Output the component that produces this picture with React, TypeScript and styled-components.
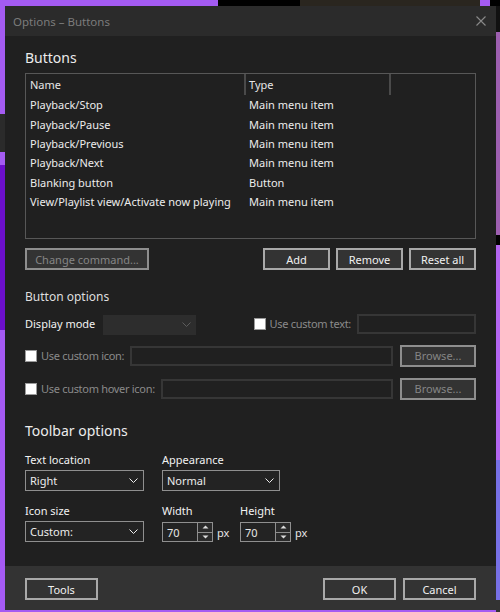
import React from "react";
import styled, { createGlobalStyle } from "styled-components";

const GlobalStyle = createGlobalStyle`
  html, body {
    margin: 0;
    padding: 0;
    background: #000;
  }
  body {
    font-family: "Noto Sans", "Open Sans", sans-serif;
    font-size: 11px;
  }
`;

const Desktop = styled.div`
  width: 500px;
  height: 612px;
  overflow: hidden;
  display: flex;
  background:
    linear-gradient(to bottom, #a45bf2 0 114px, #2b2b2b 114px 152px, #a45bf2 152px 165px, #6c0fcc 165px 330px, #a55af4 330px) left top / 5px 100% no-repeat,
    linear-gradient(to right, #a45bf2 0 218px, #000 218px 300px, #2a261f 300px 480px, #a45bf2 480px 490px, #000 490px) left top / 100% 6px no-repeat,
    linear-gradient(to bottom, #111 0 32px, #9d5fb0 32px 235px, #000 235px 245px, #b366f0 245px 460px, #7770e6 460px 600px, #333 600px) right top / 4px 100% no-repeat,
    #a45bf2;
`;

const Dialog = styled.div`
  width: 491px;
  height: 604px;
  margin: 6px 0 0 5px;
  display: flex;
  flex-direction: column;
  background: #202020;
  color: #e6e6e6;
`;

const TitleBar = styled.div`
  height: 30px;
  flex: none;
  display: flex;
  align-items: center;
  justify-content: space-between;
  padding: 0 10px 0 8px;
  background: #2b2b2b;
  color: #7c7c7c;
  font-size: 11.5px;
`;

const Body = styled.div`
  flex: 1;
  padding: 0 20px;
  display: flex;
  flex-direction: column;
`;

const Heading = styled.div<{ $top: number }>`
  font-size: 14px;
  line-height: 20px;
  margin-top: ${(p) => p.$top}px;
  color: #ececec;
`;

const SubHeading = styled.div<{ $top: number }>`
  font-size: 12px;
  line-height: 16px;
  margin-top: ${(p) => p.$top}px;
  color: #dedede;
`;

const Table = styled.div`
  margin-top: 5px;
  height: 166px;
  box-sizing: border-box;
  border: 1px solid #575757;
`;

const Row = styled.div<{ $h: number }>`
  display: grid;
  grid-template-columns: 218px 145px 1fr;
  height: ${(p) => p.$h}px;
  align-items: center;
`;

const HeaderCell = styled.div<{ $sep?: boolean }>`
  height: 100%;
  display: flex;
  align-items: center;
  padding-left: ${(p) => (p.$sep ? 3 : 4)}px;
  border-left: ${(p) => (p.$sep ? "2px solid #4a4a4a" : "none")};
`;

const Cell = styled.div<{ $indent: number }>`
  padding-left: ${(p) => p.$indent}px;
  white-space: nowrap;
  color: #ececec;
`;

const ButtonRow = styled.div`
  margin-top: 9px;
  display: flex;
  gap: 6px;
`;

const Button = styled.button<{ $w: number; $disabled?: boolean }>`
  width: ${(p) => p.$w}px;
  height: 22px;
  box-sizing: border-box;
  padding: 0;
  background: #333;
  border: 2px solid ${(p) => (p.$disabled ? "#8e8e8e" : "#a9a9a9")};
  color: ${(p) => (p.$disabled ? "#858585" : "#f0f0f0")};
  font-family: inherit;
  font-size: 11px;
`;

const Spacer = styled.div`
  flex: 1;
`;

const OptionRow = styled.div<{ $top: number }>`
  margin-top: ${(p) => p.$top}px;
  height: 21px;
  display: flex;
  align-items: center;
`;

const Label = styled.span<{ $dim?: boolean }>`
  color: ${(p) => (p.$dim ? "#8a8a8a" : "#f2f2f2")};
  letter-spacing: ${(p) => (p.$dim ? "-0.3px" : "0")};
  white-space: nowrap;
`;

const CheckBox = styled.span`
  width: 12px;
  height: 12px;
  box-sizing: border-box;
  background: #fff;
  border: 1px solid #9a9a9a;
  margin-right: 4px;
  flex: none;
`;

const TextBox = styled.div<{ $w: number }>`
  width: ${(p) => p.$w}px;
  height: 20px;
  box-sizing: border-box;
  border: 2px solid #363636;
  background: #202020;
  margin-left: 6px;
`;

const DisabledCombo = styled.div`
  width: 93px;
  height: 20px;
  margin: 2px 0 0 8px;
  background: #2d2d2d;
  display: flex;
  align-items: center;
  justify-content: flex-end;
  padding-right: 5px;
  box-sizing: border-box;
  color: #5c5c5c;
`;

const Combo = styled.div<{ $w: number }>`
  width: ${(p) => p.$w}px;
  height: 21px;
  box-sizing: border-box;
  border: 1px solid #8f8f8f;
  background: #232323;
  display: flex;
  align-items: center;
  justify-content: space-between;
  padding: 0 5px 0 4px;
  color: #ececec;
`;

const ToolbarGrid = styled.div`
  display: grid;
  grid-template-columns: 137px 78px 1fr;
  margin-top: 11px;
`;

const FieldLabel = styled.div<{ $top?: number }>`
  line-height: 16px;
  margin-top: ${(p) => p.$top ?? 0}px;
  margin-bottom: 2px;
  color: #f2f2f2;
`;

const Field = styled.div<{ $span?: number }>`
  display: flex;
  flex-direction: column;
  grid-column: span ${(p) => p.$span ?? 1};
`;

const SpinWrap = styled.div`
  display: flex;
  align-items: center;
  margin-top: 1px;
`;

const SpinInput = styled.div`
  width: 35px;
  height: 20px;
  box-sizing: border-box;
  border: 1px solid #8f8f8f;
  border-right: none;
  background: #232323;
  display: flex;
  align-items: center;
  padding-left: 4px;
`;

const SpinButtons = styled.div`
  width: 16px;
  height: 20px;
  box-sizing: border-box;
  border: 1px solid #8f8f8f;
  display: flex;
  flex-direction: column;
  background: #2a2a2a;
`;

const SpinHalf = styled.div<{ $top?: boolean }>`
  flex: 1;
  display: flex;
  align-items: center;
  justify-content: center;
  border-top: ${(p) => (p.$top ? "none" : "1px solid #8f8f8f")};
`;

const Unit = styled.span`
  margin-left: 4px;
  color: #e6e6e6;
`;

const Footer = styled.div`
  height: 44px;
  flex: none;
  background: #333;
  display: flex;
  align-items: flex-start;
  padding: 12px 20px 0;
  box-sizing: border-box;
  gap: 7px;
`;

const Chevron = () => (
  <svg width="9" height="5" viewBox="0 0 9 5">
    <polyline points="0.5,0.5 4.5,4.5 8.5,0.5" fill="none" stroke="currentColor" strokeWidth="1" />
  </svg>
);

const Arrow = ({ up }: { up?: boolean }) => (
  <svg width="7" height="4" viewBox="0 0 7 4">
    <polygon points={up ? "0.5,3.5 3.5,0.5 6.5,3.5" : "0.5,0.5 3.5,3.5 6.5,0.5"} fill="#dcdcdc" />
  </svg>
);

const Close = () => (
  <svg width="10" height="10" viewBox="0 0 10 10">
    <path d="M0.5 0.5 L9.5 9.5 M9.5 0.5 L0.5 9.5" stroke="#8a8a8a" strokeWidth="1.1" />
  </svg>
);

const rows: [string, string][] = [
  ["Playback/Stop", "Main menu item"],
  ["Playback/Pause", "Main menu item"],
  ["Playback/Previous", "Main menu item"],
  ["Playback/Next", "Main menu item"],
  ["Blanking button", "Button"],
  ["View/Playlist view/Activate now playing", "Main menu item"],
];

const Spin = ({ value }: { value: string }) => (
  <SpinWrap>
    <SpinInput>{value}</SpinInput>
    <SpinButtons>
      <SpinHalf $top>
        <Arrow up />
      </SpinHalf>
      <SpinHalf>
        <Arrow />
      </SpinHalf>
    </SpinButtons>
    <Unit>px</Unit>
  </SpinWrap>
);

export default function App() {
  return (
    <>
      <GlobalStyle />
      <Desktop>
        <Dialog>
          <TitleBar>
            <span>Options – Buttons</span>
            <Close />
          </TitleBar>
          <Body>
            <Heading $top={12}>Buttons</Heading>
            <Table>
              <Row $h={21}>
                <HeaderCell>Name</HeaderCell>
                <HeaderCell $sep>Type</HeaderCell>
                <HeaderCell $sep />
              </Row>
              {rows.map(([name, type]) => (
                <Row $h={19.4} key={name}>
                  <Cell $indent={4}>{name}</Cell>
                  <Cell $indent={5}>{type}</Cell>
                  <span />
                </Row>
              ))}
            </Table>
            <ButtonRow>
              <Button $w={124} $disabled>
                Change command...
              </Button>
              <Spacer />
              <Button $w={67}>Add</Button>
              <Button $w={67}>Remove</Button>
              <Button $w={67}>Reset all</Button>
            </ButtonRow>

            <SubHeading $top={19}>Button options</SubHeading>
            <OptionRow $top={8}>
              <Label>Display mode</Label>
              <DisabledCombo>
                <Chevron />
              </DisabledCombo>
              <Spacer />
              <CheckBox />
              <Label $dim>Use custom text:</Label>
              <TextBox $w={119} />
            </OptionRow>
            <OptionRow $top={11}>
              <CheckBox />
              <Label $dim>Use custom icon:</Label>
              <TextBox $w={263} />
              <Spacer />
              <Button $w={76} $disabled>
                Browse...
              </Button>
            </OptionRow>
            <OptionRow $top={12}>
              <CheckBox />
              <Label $dim>Use custom hover icon:</Label>
              <TextBox $w={232} />
              <Spacer />
              <Button $w={76} $disabled>
                Browse...
              </Button>
            </OptionRow>

            <Heading $top={22}>Toolbar options</Heading>
            <ToolbarGrid>
              <Field>
                <FieldLabel>Text location</FieldLabel>
                <Combo $w={119}>
                  Right
                  <Chevron />
                </Combo>
              </Field>
              <Field $span={2}>
                <FieldLabel>Appearance</FieldLabel>
                <Combo $w={118}>
                  Normal
                  <Chevron />
                </Combo>
              </Field>
              <Field>
                <FieldLabel $top={12}>Icon size</FieldLabel>
                <Combo $w={119}>
                  Custom:
                  <Chevron />
                </Combo>
              </Field>
              <Field>
                <FieldLabel $top={12}>Width</FieldLabel>
                <Spin value="70" />
              </Field>
              <Field>
                <FieldLabel $top={12}>Height</FieldLabel>
                <Spin value="70" />
              </Field>
            </ToolbarGrid>
          </Body>
          <Footer>
            <Button $w={73}>Tools</Button>
            <Spacer />
            <Button $w={73}>OK</Button>
            <Button $w={73}>Cancel</Button>
          </Footer>
        </Dialog>
      </Desktop>
    </>
  );
}
